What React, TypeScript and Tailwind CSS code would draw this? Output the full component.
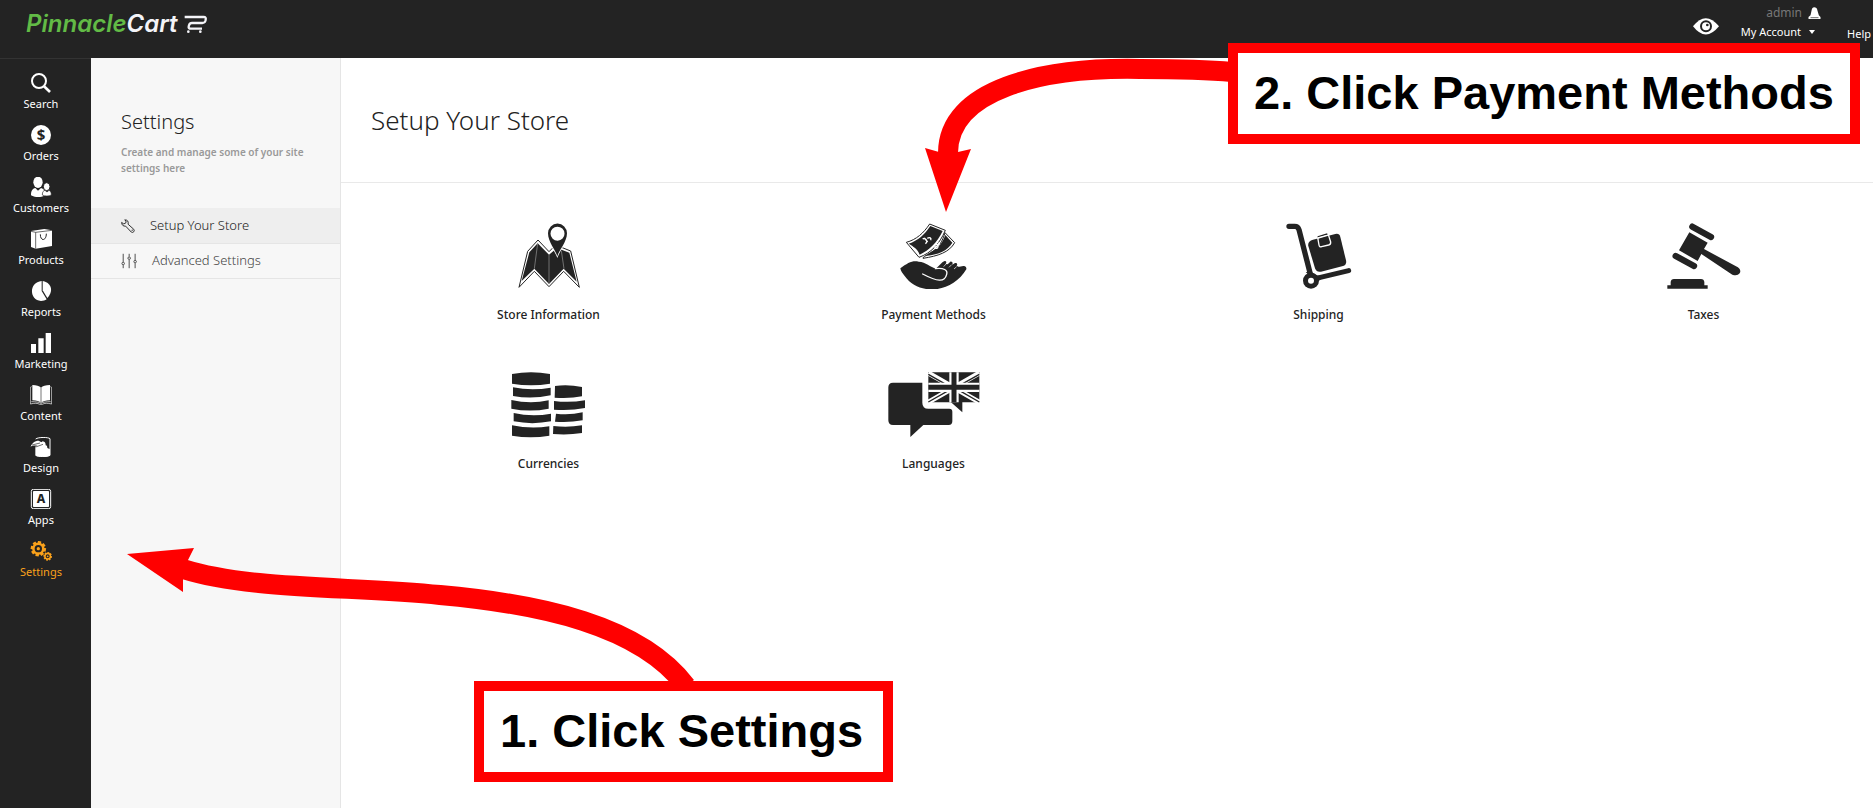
import type { ReactNode } from 'react';

type IconProps = { viewBox: string; className: string; children: ReactNode };

function Icon({ viewBox, className, children }: IconProps) {
  return (
    <svg viewBox={viewBox} className={className} fill="currentColor" aria-hidden="true">
      {children}
    </svg>
  );
}

const GEAR_TEETH = [0, 45, 90, 135, 180, 225, 270, 315];

function Gear({ cx, cy, r, hole }: { cx: number; cy: number; r: number; hole: number }) {
  return (
    <g>
      {GEAR_TEETH.map(angle => (
        <rect
          key={angle}
          x={cx - r * 0.22}
          y={cy - r}
          width={r * 0.44}
          height={r * 0.4}
          transform={`rotate(${angle + 10} ${cx} ${cy})`}
        />
      ))}
      <circle cx={cx} cy={cy} r={(r * 0.8 + hole) / 2} fill="none" stroke="currentColor" strokeWidth={r * 0.8 - hole} />
      <circle cx={cx} cy={cy} r={hole * 0.45} />
    </g>
  );
}

const NAV_ITEMS = [
  {
    label: 'Search',
    viewBox: '90 219 66 60',
    icon: (
      <>
        <circle cx="117" cy="243" r="21" fill="none" stroke="currentColor" strokeWidth="6" />
        <path d="M132 259l18 17" stroke="currentColor" strokeWidth="8" />
      </>
    ),
  },
  {
    label: 'Orders',
    viewBox: '90 375 66 60',
    icon: (
      <>
        <circle cx="123" cy="405" r="30" />
        <text x="123" y="421" textAnchor="middle" fontSize="45" fontWeight="700" fill="#232323">$</text>
      </>
    ),
  },
  {
    label: 'Customers',
    viewBox: '90 531 66 60',
    icon: (
      <>
        <ellipse cx="114" cy="547" rx="14" ry="17" />
        <path d="M93 586c0-14 4-20 13-22l8 8 9-8c10 3 13 8 13 22-9 7-34 7-43 0z" />
        <ellipse cx="140" cy="560" rx="10" ry="12" stroke="#232323" strokeWidth="3" />
        <path d="M127 585c0-10 3-13 8-14l6 5 6-5c5 2 7 6 7 14-6 4-21 4-27 0z" stroke="#232323" strokeWidth="2" />
      </>
    ),
  },
  {
    label: 'Products',
    viewBox: '90 687 66 60',
    icon: (
      <>
        <path d="M93 693l40-6 23 4v47l-49 8-14-5z" />
        <path d="M93 694l14 3 49-6M107 697v49" fill="none" stroke="#232323" strokeWidth="2" />
        <path d="M121 703c0 22 18 20 18-2" fill="none" stroke="#232323" strokeWidth="3" />
      </>
    ),
  },
  {
    label: 'Reports',
    viewBox: '90 33 66 60',
    icon: (
      <>
        <path d="M125 33c-38 3-39 57-2 60 7 0 12-1 17-5l-15-25z" />
        <path d="M128 33c26 4 34 31 14 51l-14-23z" />
      </>
    ),
  },
  {
    label: 'Marketing',
    viewBox: '90 189 66 60',
    icon: <path d="M93 222h15v27H93zM115 205h16v44h-16zM137 189h16v60h-16z" />,
  },
  {
    label: 'Content',
    viewBox: '90 345 66 60',
    icon: (
      <>
        <path d="M97 345c12 1 21 3 26 8 5-5 14-7 27-8v46c-13 1-21 3-27 7-5-4-13-6-26-7z" />
        <path
          d="M95 350l-4 2v50c12-3 22-3 28 1h8c6-4 16-4 28-1v-50l-4-2M94 395c13 0 22 1 29 5 7-4 16-5 29-5"
          fill="none"
          stroke="currentColor"
          strokeWidth="2"
        />
        <path d="M123 353v44" stroke="#777" strokeWidth="3" />
      </>
    ),
  },
  {
    label: 'Design',
    viewBox: '90 501 66 60',
    icon: (
      <>
        <path d="M107 507c8-6 37-6 43-1v50c-8 5-35 5-43 0" fill="none" stroke="currentColor" strokeWidth="3" />
        <path d="M106 530l22-16c7 1 9 5 9 12 3 0 5 2 5 8l8 4v18c-7 6-37 6-44 0z" />
        <path d="M92 530c3-10 12-18 24-18l14 8-9 7c-10 1-20-3-29 3z" />
        <path d="M96 525l24-6M107 531l22-8" stroke="#232323" strokeWidth="2" />
      </>
    ),
  },
  {
    label: 'Apps',
    viewBox: '90 657 66 60',
    icon: (
      <>
        <rect x="94" y="658" width="58" height="58" rx="6" fill="none" stroke="currentColor" strokeWidth="3" />
        <rect x="99" y="663" width="48" height="48" rx="2" />
        <text x="123" y="700" textAnchor="middle" fontSize="36" fontWeight="800" fill="#232323">A</text>
      </>
    ),
  },
  {
    label: 'Settings',
    viewBox: '90 813 66 60',
    active: true,
    icon: (
      <>
        <Gear cx={115} cy={836} r={23} hole={11} />
        <Gear cx={143} cy={859} r={13} hole={6} />
      </>
    ),
  },
];

const STORE_TILES = [
  {
    label: 'Store Information',
    viewBox: '114 67 186 198',
    size: 'h-[66px] w-[62px]',
    icon: (
      <>
        <path
          d="M117 260l26-108 31-34 33 35 20-20 45 18 26 109-47-48-44 46-44-46z"
          fill="none"
          stroke="currentColor"
          strokeWidth="3"
        />
        <path d="M125 241l23-86 25-27 34 34 24-20 37 14 22 87-39-39-44 46-44-46z" />
        <path d="M173 128l-10 76M207 162v88M244 150l8 54" stroke="#999" strokeWidth="2" />
        <path d="M232 172c-4-16-31-47-31-74 0-40 62-40 62 0 0 27-27 58-31 74z" fill="#fff" />
        <path
          d="M232 167c-4-16-28-43-28-69a28 29 0 0 1 57 0c0 26-25 53-29 69zM232 78a21 21 0 1 0 1 42 21 21 0 1 0-1-42z"
          fillRule="evenodd"
        />
      </>
    ),
  },
  {
    label: 'Payment Methods',
    viewBox: '92 67 201 198',
    size: 'h-[66px] w-[67px]',
    icon: (
      <>
        <path d="M161 171c25-20 50-20 66-75l29 30c-16 29-50 40-95 47z" fill="#fff" stroke="currentColor" strokeWidth="3" />
        <path d="M168 165c26-16 48-26 60-62l21 23c-14 24-43 36-81 40z" />
        <path d="M111 125c30-8 52-28 70-55l47 19c-18 42-43 68-79 81z" fill="#fff" stroke="currentColor" strokeWidth="3" />
        <path d="M118 129c28-9 48-27 65-53l37 15c-17 35-40 57-69 71-7-19-19-24-33-33z" />
        <path
          d="M160 115c8-6 18 8 8 14M165 112l10 12M174 113c7-5 13-1 10 6M199 133c4-5 10 0 6 8-7 6-11-2-6-6M207 126l4 6"
          fill="none"
          stroke="#fff"
          strokeWidth="4"
        />
        <path d="M93 203c22-17 38-25 55-20 22 0 34 18 53 20l19-19 6-3c6 0 6 5 3 9l6 1 8-8c6-1 8 4 6 9l8-5c7-1 8 4 5 9 6 2 4 3 8 2l12-2c8-1 10 6 9 10-44 74-144 79-185 20-6-8-12-14-13-23z" />
        <path
          d="M198 204c25-3 38 4 34 17-6 25-28 22-72-1"
          fill="none"
          stroke="#fff"
          strokeWidth="4"
          strokeLinecap="round"
        />
        <path d="M230 190l-7 8M247 192l-8 8M262 198l-8 7" stroke="#fff" strokeWidth="2" />
      </>
    ),
  },
  {
    label: 'Shipping',
    viewBox: '77 67 198 198',
    size: 'size-[66px]',
    icon: (
      <>
        <path
          d="M86 77h17q10 0 13 10l35 137"
          fill="none"
          stroke="currentColor"
          strokeWidth="16"
          strokeLinecap="round"
          strokeLinejoin="round"
        />
        <path d="M155 236l110-26" stroke="currentColor" strokeWidth="15" strokeLinecap="round" />
        <path d="M136 215l16-4q12 16 30 14l20-5-28 22z" />
        <circle cx="152" cy="240" r="24" />
        <circle cx="152" cy="240" r="9" fill="#fff" />
        <path d="M158 117l67-17q12-3 15 9l17 70q3 13-9 17l-66 17q-13 3-18-10l-20-67q-3-14 14-19z" />
        <path d="M172 110l4 23q1 7 8 5l21-5q7-2 6-9l-7-22" fill="none" stroke="#fff" strokeWidth="4" />
        <path d="M172 109l29-9M178 113l23-6" stroke="#232323" strokeWidth="4" />
        <path d="M173 112l28-8" stroke="#fff" strokeWidth="4" />
      </>
    ),
  },
  {
    label: 'Taxes',
    viewBox: '80 67 222 198',
    size: 'h-[66px] w-[74px]',
    icon: (
      <>
        <path d="M156 78l56 31M106 166l55 30" stroke="currentColor" strokeWidth="19" strokeLinecap="round" />
        <path d="M147 95l55 31-11 19 96 52q18 9 11 21-7 9-22 4l-93-62-11 21-56-32z" />
        <path d="M91 254v-10q1-9 10-9h81q9 0 10 9v10h10v10H81v-10z" />
      </>
    ),
  },
  {
    label: 'Currencies',
    viewBox: '96 515 225 198',
    size: 'h-[66px] w-[75px]',
    icon: (
      <>
        <path d="M99 521q57-10 114 0v29q-57 10-114 0z" />
        <path d="M102 561q56 11 113 1v23q-57 12-113 2z" />
        <path d="M97 599q57 13 112 1v25q-56 11-112 0z" />
        <path d="M104 638q55 12 112 2v23q-56 11-112 0z" />
        <path d="M99 675q56 12 112 3v28q-56 10-112 0z" />
        <path d="M228 557q40-5 81 3v28q-35 7-82 4z" />
        <path d="M225 602q46 6 93-2v23q-45 9-93 5z" />
        <path d="M231 640q40 5 80-4v24q-44 8-83 4z" />
        <path d="M223 677q44 5 86-2v23q-42 7-87 3z" />
      </>
    ),
  },
  {
    label: 'Languages',
    viewBox: '53 515 276 198',
    size: 'h-[66px] w-[92px]',
    icon: (
      <>
        <path d="M68 547h88v60q0 18 18 18h63q9 0 9 9v29q0 11-11 11h-76l-39 36v-36H68q-14 0-14-14v-99q0-14 14-14z" />
        <path d="M174 516h153v90h-51v30l-34-30h-68z" />
        <path d="M174 518l154 88M327 518l-154 88" stroke="#fff" strokeWidth="15" />
        <path d="M174 522l75 43M327 522l-75 42M252 562l75 43M250 562l-76 43" stroke="currentColor" strokeWidth="4" />
        <path d="M251 516v90M174 561h153" stroke="#fff" strokeWidth="28" />
        <path d="M251 516v90M174 561h153" stroke="currentColor" strokeWidth="15" />
      </>
    ),
  },
];

function Logo() {
  return (
    <a href="#" className="flex items-center gap-1.5 font-['Inter','Liberation_Sans',sans-serif] text-2xl leading-6 font-semibold italic">
      <span className="text-[#62bb46]">
        Pinnacle<span className="text-[#f4f4f8]">Cart</span>
      </span>
      <svg viewBox="488 31 72 54" className="h-[18px] w-6 text-[#f4f4f8]" fill="none" stroke="currentColor" aria-hidden="true">
        <path d="M490 37h57q8 0 6 8l-1 4q-2 6-9 6h-31q-7 0-9 7l-1 4q-1 6 6 6h34" strokeWidth="7" />
        <circle cx="501" cy="81" r="4" fill="currentColor" stroke="none" />
        <circle cx="537" cy="81" r="4" fill="currentColor" stroke="none" />
      </svg>
    </a>
  );
}

function TopBar() {
  return (
    <header className="flex h-[58px] items-start justify-between bg-[#232323] pl-[26px] text-[11px] text-white">
      <div className="pt-3">
        <Logo />
      </div>
      <div className="flex items-start">
        <button type="button" aria-label="View store" className="mt-[18px] mr-[22px]">
          <Icon viewBox="66 56 78 51" className="h-[17px] w-[26px]">
            <path d="M66 81q38-49 78 0-40 49-78 0z" />
            <circle cx="105" cy="81" r="15" fill="none" stroke="#232323" strokeWidth="6" />
            <circle cx="109" cy="77" r="4" fill="#232323" />
          </Icon>
        </button>
        <div className="mr-[26px] flex flex-col items-end pt-[5px]">
          <span className="flex items-center gap-1.5 text-xs text-[#777]">
            admin
            <Icon viewBox="416 23 38 39" className="h-[13px] w-[13px] text-white">
              <path d="M434 24q8 0 10 10l4 14 5 5v6h-36v-6l6-5 3-14q2-10 8-10z" />
              <path d="M423 55h24" stroke="#232323" strokeWidth="2" />
            </Icon>
          </span>
          <button type="button" className="mt-[3px] flex items-center gap-2 pr-1.5 leading-4">
            My Account
            <Icon viewBox="0 0 6 4" className="h-1 w-1.5">
              <path d="M0 0h6L3 4z" />
            </Icon>
          </button>
        </div>
        <a href="#" className="pt-[26px] pr-0.5 leading-4">Help</a>
      </div>
    </header>
  );
}

function MainNav() {
  return (
    <nav className="w-[91px] shrink-0 border-t border-[#333] bg-[#232323] pt-[14px] pr-[9px] text-white">
      {NAV_ITEMS.map(item => (
        <a
          key={item.label}
          href="#"
          className={`flex h-[52px] flex-col items-center text-[11px] ${item.active ? 'text-[#f9a11b]' : ''}`}
        >
          <Icon viewBox={item.viewBox} className="h-5 w-[22px]">
            {item.icon}
          </Icon>
          <span className="mt-[3px] leading-4">{item.label}</span>
        </a>
      ))}
    </nav>
  );
}

function SettingsMenu() {
  return (
    <aside className="w-[250px] shrink-0 border-r border-[#e5e5e5] bg-[#f7f7f7]">
      <div className="h-[150px] pt-[50px] pr-7 pl-[30px]">
        <h2 className="text-xl leading-7 font-light text-[#222]">Settings</h2>
        <p className="mt-2 text-[10px] leading-4 font-semibold text-[#999]">Create and manage some of your site settings here</p>
      </div>
      <a href="#" className="flex h-9 items-center gap-[15px] border-b border-[#e5e5e5] bg-[#eee] pl-[30px] text-[13px] font-light text-[#222]">
        <Icon viewBox="362 650 45 45" className="size-[14px]">
          <path
            d="M374 653q13-1 11 14l18 16q3 4 0 8t-8 1l-18-19q-12 1-13-12l7 5 7-4v-6z"
            fill="none"
            stroke="currentColor"
            strokeWidth="3"
          />
          <circle cx="398" cy="686" r="2" />
        </Icon>
        Setup Your Store
      </a>
      <a href="#" className="flex h-[35px] items-center gap-[15px] border-b border-[#e5e5e5] pl-[30px] text-[13px] font-light text-[#444]">
        <Icon viewBox="361 758 51 48" className="h-4 w-4">
          <path
            d="M368 759v26M368 795v10M387 759v9M387 778v27M406 759v20M406 789v16"
            stroke="currentColor"
            strokeWidth="3"
          />
          <g fill="none" stroke="currentColor" strokeWidth="3">
            <circle cx="368" cy="790" r="4" />
            <circle cx="387" cy="773" r="4" />
            <circle cx="406" cy="784" r="4" />
          </g>
        </Icon>
        Advanced Settings
      </a>
    </aside>
  );
}

function Callout({ className, children }: { className: string; children: ReactNode }) {
  return (
    <div
      className={`absolute border-[10px] border-[#ff0000] bg-white pb-0.5 pl-4 font-['Liberation_Sans',Arial,sans-serif] text-[47px] leading-[79px] font-bold whitespace-nowrap text-black ${className}`}
    >
      {children}
    </div>
  );
}

function Annotations() {
  return (
    <>
      <svg className="pointer-events-none absolute top-0 left-0" width="1300" height="700" aria-hidden="true">
        <g fill="none" stroke="#ff0000" strokeWidth="20">
          <path d="M948 153C948 90 1040 67 1140 69C1170 69 1200 69 1232 72" />
          <path d="M183 569C250 590 350 586 440 595C540 604 640 625 686 686" />
        </g>
        <g fill="#ff0000">
          <path d="M946 212l-21-64 14 4h19l13-3z" />
          <path d="M127 554l67-6-6 12-5 19v13z" />
        </g>
      </svg>
      <Callout className="top-[43px] left-[1228px] pr-4">2. Click Payment Methods</Callout>
      <Callout className="top-[681px] left-[474px] pr-5">1. Click Settings</Callout>
    </>
  );
}

export default function App() {
  return (
    <div className="relative flex min-h-screen flex-col overflow-hidden bg-white font-['Noto_Sans','Open_Sans',sans-serif] text-[#232323]">
      <TopBar />
      <div className="flex flex-1">
        <MainNav />
        <SettingsMenu />
        <main className="min-w-0 flex-1">
          <div className="h-[125px] border-b border-[#e9e9e9] pt-[44px] pl-[30px]">
            <h1 className="text-[26px] leading-9 font-light text-[#222]">Setup Your Store</h1>
          </div>
          {/* the last column runs slightly past the window edge */}
          <div className="-mr-[23px] ml-[15px] grid grid-cols-4 pt-10">
            {STORE_TILES.map(tile => (
              <a key={tile.label} href="#" className="flex h-[149px] flex-col items-center text-xs font-medium">
                <Icon viewBox={tile.viewBox} className={tile.size}>
                  {tile.icon}
                </Icon>
                <span className="mt-4 leading-5">{tile.label}</span>
              </a>
            ))}
          </div>
        </main>
      </div>
      <Annotations />
    </div>
  );
}
